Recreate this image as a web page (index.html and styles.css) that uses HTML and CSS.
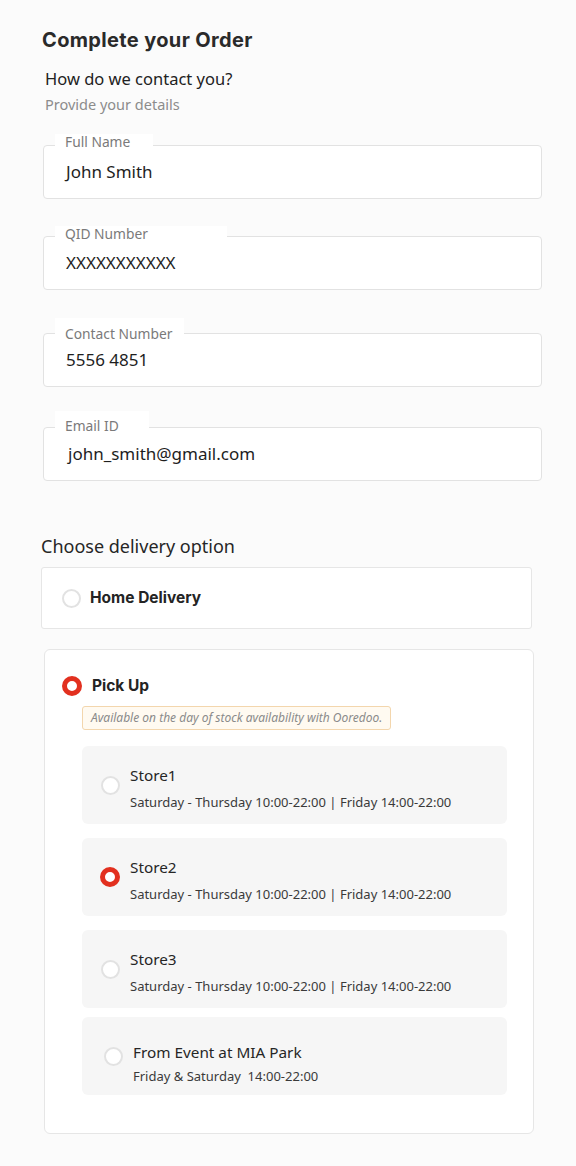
FILE: index.html
```html
<!DOCTYPE html>
<html lang="en">
<head>
<meta charset="utf-8">
<title>Complete your Order</title>
<link rel="stylesheet" href="styles.css">
</head>
<body>
<main class="page">
  <h1 class="title">Complete your Order</h1>
  <p class="intro">How do we contact you?</p>
  <p class="sub">Provide your details</p>

  <div class="field field--first">
    <span class="field-label">Full Name</span>
    <span class="field-value">John Smith</span>
  </div>
  <div class="field field--qid">
    <span class="field-label">QID Number</span>
    <span class="field-value">XXXXXXXXXXX</span>
  </div>
  <div class="field field--contact">
    <span class="field-label">Contact Number</span>
    <span class="field-value">5556 4851</span>
  </div>
  <div class="field field--email">
    <span class="field-label">Email ID</span>
    <span class="field-value field-value--email">john_smith@gmail.com</span>
  </div>

  <h2 class="section-title">Choose delivery option</h2>

  <div class="option-card option-card--home">
    <span class="radio"></span>
    <span class="option-name">Home Delivery</span>
  </div>

  <div class="option-card option-card--pickup">
    <div class="pickup-row">
      <span class="radio radio--on"></span>
      <span class="option-name">Pick Up</span>
    </div>
    <div class="notice">Available on the day of stock availability with Ooredoo.</div>

    <div class="stores">
      <div class="store">
        <span class="radio"></span>
        <div class="store-text">
          <div class="store-name">Store1</div>
          <div class="store-hours">Saturday - Thursday 10:00-22:00 | Friday 14:00-22:00</div>
        </div>
      </div>
      <div class="store">
        <span class="radio radio--on"></span>
        <div class="store-text">
          <div class="store-name">Store2</div>
          <div class="store-hours">Saturday - Thursday 10:00-22:00 | Friday 14:00-22:00</div>
        </div>
      </div>
      <div class="store">
        <span class="radio"></span>
        <div class="store-text">
          <div class="store-name">Store3</div>
          <div class="store-hours">Saturday - Thursday 10:00-22:00 | Friday 14:00-22:00</div>
        </div>
      </div>
      <div class="store store--event">
        <span class="radio"></span>
        <div class="store-text">
          <div class="store-name">From Event at MIA Park</div>
          <div class="store-hours">Friday &amp; Saturday&nbsp; 14:00-22:00</div>
        </div>
      </div>
    </div>
  </div>
</main>
</body>
</html>
```

FILE: styles.css
```css
* { box-sizing: border-box; }

html, body {
  margin: 0;
  padding: 0;
  background: #fbfbfb;
}

body {
  font-family: "Noto Sans", "Open Sans", sans-serif;
  color: #262626;
}

.page {
  padding: 28px 0 40px 41px;
  width: 576px;
}

.title {
  margin: 0 0 0 1px;
  font-family: Inter, "Noto Sans", sans-serif;
  font-weight: 700;
  font-size: 20px;
  line-height: 24px;
  color: #2a2a2a;
  letter-spacing: 0.35px;
}

.intro {
  margin: 16px 0 0 4px;
  font-size: 16.5px;
  line-height: 22px;
  color: #222;
}

.sub {
  margin: 4px 0 0 4px;
  font-size: 14.5px;
  line-height: 20px;
  color: #8c8c8c;
}

.field {
  position: relative;
  margin-left: 2px;
  width: 499px;
  height: 54px;
  background: #fff;
  border: 1px solid #e2e2e2;
  border-radius: 4px;
  display: flex;
  align-items: center;
  padding-left: 22px;
}

.field--first { margin-top: 31px; }
.field--qid { margin-top: 37px; }
.field--contact { margin-top: 43px; }
.field--email { margin-top: 40px; }

.field-label {
  position: absolute;
  left: 11px;
  top: -12px;
  padding: 0 23px 3px 10px;
  background: #fff;
  font-size: 13.8px;
  line-height: 16px;
  color: #7a7a7a;
}

.field--qid .field-label { top: -11px; padding-right: 79px; }
.field--contact .field-label { top: -16px; padding-top: 8px; padding-right: 12px; }
.field--email .field-label { top: -17px; padding-top: 7px; padding-right: 30px; }

.field-value {
  font-size: 17px;
  line-height: 22px;
  color: #1e1e1e;
}

.field-value--email { margin-left: 2px; }

.section-title {
  margin: 53px 0 0 0;
  font-size: 18px;
  font-weight: 400;
  line-height: 24px;
  color: #262626;
}

.option-card {
  background: #fff;
  border: 1px solid #e6e6e6;
}

.option-card--home {
  margin-top: 9px;
  width: 491px;
  height: 62px;
  border-radius: 3px;
  display: flex;
  align-items: center;
  gap: 9px;
  padding-left: 20px;
}

.option-name {
  font-family: Inter, "Noto Sans", sans-serif;
  font-weight: 700;
  font-size: 15.5px;
  line-height: 22px;
  color: #242424;
}

.option-card--pickup {
  margin: 20px 0 0 3px;
  width: 490px;
  border-radius: 6px;
  padding: 25px 0 38px 17px;
}

.pickup-row {
  display: flex;
  align-items: center;
  gap: 10px;
}

.radio {
  flex: none;
  width: 19px;
  height: 19px;
  border-radius: 50%;
  border: 2px solid #e2e2e2;
  background: #fff;
}

.radio--on {
  width: 20px;
  height: 20px;
  border: 5px solid #e2301f;
}

.notice {
  margin: 9px 0 0 20px;
  width: 309px;
  height: 24px;
  border: 1px solid #f3d6ad;
  background: #fffaf1;
  border-radius: 3px;
  padding-left: 8px;
  font-size: 12px;
  line-height: 22px;
  font-style: italic;
  color: #8a8a8a;
  white-space: nowrap;
}

.stores {
  margin: 16px 0 0 20px;
  width: 425px;
  display: flex;
  flex-direction: column;
  gap: 14px;
}

.store {
  height: 78px;
  background: #f6f6f6;
  border-radius: 6px;
  display: flex;
  align-items: center;
  gap: 10px;
  padding-left: 19px;
}

.store:nth-child(2) { padding-left: 18px; }

.store--event {
  margin-top: -5px;
  padding-left: 22px;
}

.store-text {
  display: flex;
  flex-direction: column;
  gap: 8px;
  padding-top: 6px;
}

.store--event .store-text {
  gap: 5px;
  padding-top: 15px;
}

.store-name {
  font-size: 15.3px;
  line-height: 20px;
  color: #262626;
}

.store-hours {
  font-size: 13px;
  line-height: 18px;
  color: #3a3a3a;
}
```
